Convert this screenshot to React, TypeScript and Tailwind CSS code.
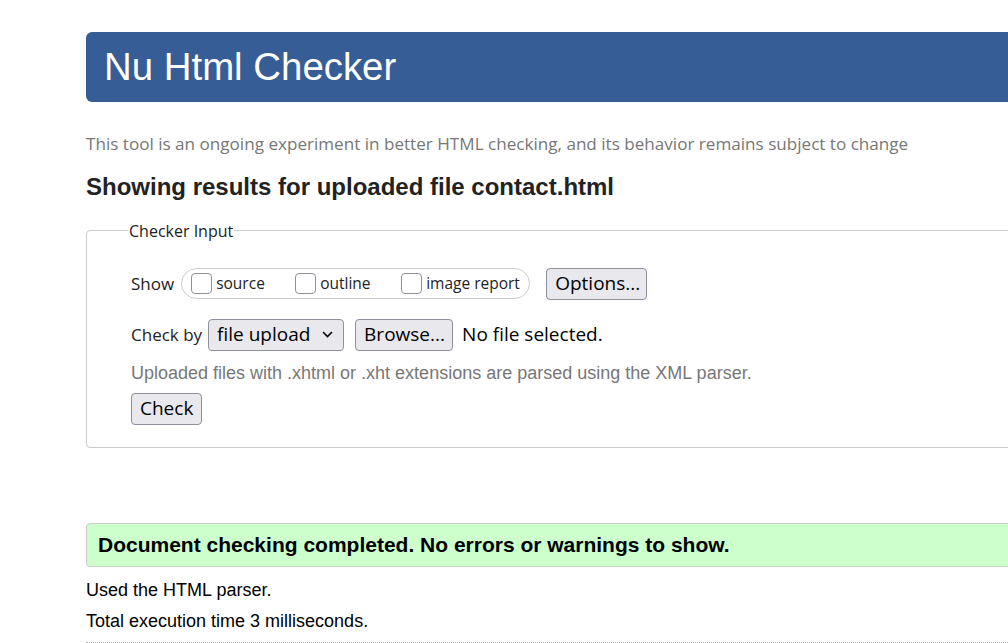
export default function App() {
  const seg = { fontFamily: '"Open Sans", "Noto Sans", sans-serif' };
  const arial = { fontFamily: '"Liberation Sans", Arial, sans-serif' };
  const btn =
    "rounded-[4px] border border-[#8f8f9d] bg-[#e9e9ed] px-[8px] text-[19px] leading-none text-black";
  const box = "h-[21px] w-[21px] shrink-0 rounded-[4px] border border-[#8f8f9d] bg-white";

  return (
    <div className="h-[643px] w-[1008px] overflow-hidden bg-white" style={arial}>
      <div className="ml-[86px] w-[1100px] pt-[32px]">
        <h1 className="flex h-[70px] items-center rounded-[6px] bg-[#365d95] pl-[18px] text-[38.4px] text-white">
          Nu Html Checker
        </h1>

        <p className="mt-[29px] text-[17.1px] text-[#777]" style={seg}>
          This tool is an ongoing experiment in better HTML checking, and its behavior remains subject to change
        </p>

        <h2 className="mt-[12px] text-[24px] font-bold text-[#222]">
          Showing results for uploaded file contact.html
        </h2>

        <fieldset className="mt-[14px] h-[229px] rounded-[4px] border border-[#ccc] pl-[44px]">
          <legend className="-ml-[3px] px-[1px] text-[16px] text-[#222]" style={seg}>
            Checker Input
          </legend>

          <div className="mt-[25px] flex items-center" style={seg}>
            <span className="text-[17px] text-[#222]">Show</span>
            <div className="ml-[7px] flex h-[31px] w-[349px] items-center rounded-full border border-[#ccc] pl-[9px] text-[15.5px] text-[#222]">
              <label className="flex w-[104px] items-center">
                <span className={box} />
                <span className="ml-[4px]">source</span>
              </label>
              <label className="flex w-[106px] items-center">
                <span className={box} />
                <span className="ml-[4px]">outline</span>
              </label>
              <label className="flex items-center">
                <span className={box} />
                <span className="ml-[4px]">image report</span>
              </label>
            </div>
            <button className={`${btn} ml-[16px] h-[32px] w-[101px]`} style={seg}>
              Options...
            </button>
          </div>

          <div className="mt-[19px] flex items-center" style={seg}>
            <span className="text-[17px] text-[#222]">Check by</span>
            <div
              className={`${btn} ml-[6px] flex h-[32px] w-[136px] items-center justify-between pr-[10px]`}
            >
              <span>file upload</span>
              <svg width="11" height="7" viewBox="0 0 11 7" fill="none">
                <path d="M1 1l4.5 4.5L10 1" stroke="#000" strokeWidth="1.6" />
              </svg>
            </div>
            <button className={`${btn} ml-[11px] h-[32px] w-[98px]`} style={seg}>
              Browse...
            </button>
            <span className="ml-[9px] text-[19px] text-black">No file selected.</span>
          </div>

          <p className="mt-[9px] text-[18px] text-[#777]" style={arial}>
            Uploaded files with .xhtml or .xht extensions are parsed using the XML parser.
          </p>

          <button className={`${btn} mt-[6px] h-[32px] w-[71px]`} style={seg}>
            Check
          </button>
        </fieldset>

        <div className="mt-[75px] flex h-[44px] items-center rounded-[4px] border border-[#ccc] bg-[#ccffcc] pl-[11px] text-[21px] font-bold text-black">
          Document checking completed. No errors or warnings to show.
        </div>

        <p className="mt-[10px] text-[18px] text-black">Used the HTML parser.</p>
        <p className="mt-[4px] text-[18px] text-black">Total execution time 3 milliseconds.</p>
        <div className="mt-[7px] border-t border-dotted border-[#aaa]" />
      </div>
    </div>
  );
}
